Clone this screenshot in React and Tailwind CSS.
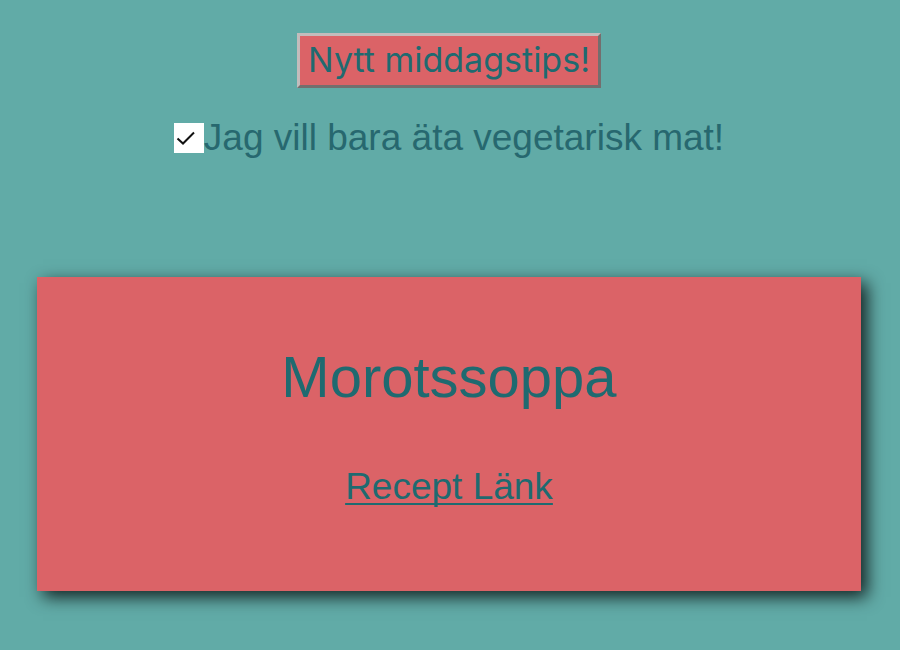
export default function App() {
  return (
    <main className="flex min-h-screen flex-col items-center bg-[#61aba7] pt-[33px] pr-[39px] pl-[37px] font-['Liberation_Sans',Arial,sans-serif] text-[37px] text-[#1f6a70]">
      <button
        type="button"
        className="border-3 border-t-[#c3bcbc] border-r-[#746e6e] border-b-[#746e6e] border-l-[#c3bcbc] bg-[#db6367] px-2 pt-[5px] pb-[6px] font-[Inter,sans-serif] text-[34px] leading-[38px]"
      >
        Nytt middagstips!
      </button>
      <label className="mt-7 flex items-center leading-[44px] text-[#27686f]">
        <span className="grid size-[30px] place-items-center bg-white">
          <input type="checkbox" defaultChecked className="peer col-start-1 row-start-1 size-[30px] appearance-none" />
          <svg viewBox="0 0 30 30" className="pointer-events-none col-start-1 row-start-1 hidden size-[30px] peer-checked:block" fill="none" stroke="#111" strokeWidth="2">
            <path d="M3.5 15.5 L9 20.5 L20 9.5" />
          </svg>
        </span>
        Jag vill bara äta vegetarisk mat!
      </label>
      <section className="mt-[117px] flex w-full flex-col items-center bg-[#db6367] pt-[66px] pb-[82px] shadow-[6px_6px_16px_#000000cc]">
        <h1 className="text-[58px] leading-[68px]">Morotssoppa</h1>
        <a
          href="#recept"
          className="mt-[54px] leading-[44px] underline decoration-2 underline-offset-4 [text-decoration-skip-ink:none]"
        >
          Recept Länk
        </a>
      </section>
    </main>
  );
}
